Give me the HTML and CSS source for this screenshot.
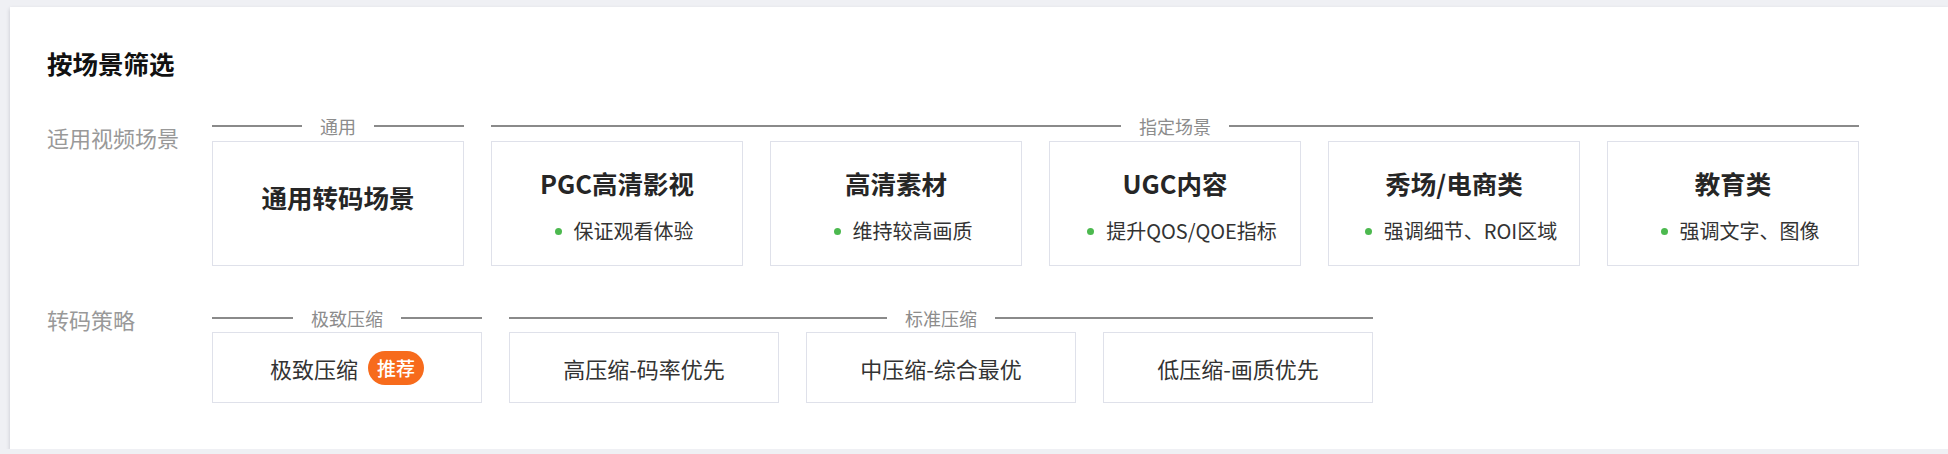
FILE: index.html
```html
<!DOCTYPE html>
<html lang="zh-CN">
<head>
<meta charset="utf-8">
<title>按场景筛选</title>
<link rel="stylesheet" href="styles.css">
</head>
<body>
<div class="panel">
  <h2 class="panel-title">按场景筛选</h2>

  <div class="filter-row filter-row--scene">
    <div class="row-label">适用视频场景</div>
    <div class="groups">
      <div class="group">
        <div class="divider"><span>通用</span></div>
        <div class="options">
          <div class="scene-card scene-card--single">
            <div class="scene-title">通用转码场景</div>
          </div>
        </div>
      </div>
      <div class="group">
        <div class="divider"><span>指定场景</span></div>
        <div class="options">
          <div class="scene-card">
            <div class="scene-title">PGC高清影视</div>
            <div class="scene-desc"><i class="dot"></i>保证观看体验</div>
          </div>
          <div class="scene-card">
            <div class="scene-title">高清素材</div>
            <div class="scene-desc"><i class="dot"></i>维持较高画质</div>
          </div>
          <div class="scene-card">
            <div class="scene-title">UGC内容</div>
            <div class="scene-desc"><i class="dot"></i>提升QOS/QOE指标</div>
          </div>
          <div class="scene-card">
            <div class="scene-title">秀场/电商类</div>
            <div class="scene-desc"><i class="dot"></i>强调细节、ROI区域</div>
          </div>
          <div class="scene-card">
            <div class="scene-title">教育类</div>
            <div class="scene-desc"><i class="dot"></i>强调文字、图像</div>
          </div>
        </div>
      </div>
    </div>
  </div>

  <div class="filter-row filter-row--strategy">
    <div class="row-label">转码策略</div>
    <div class="groups">
      <div class="group">
        <div class="divider"><span>极致压缩</span></div>
        <div class="options">
          <div class="strategy-card">极致压缩<span class="badge">推荐</span></div>
        </div>
      </div>
      <div class="group">
        <div class="divider"><span>标准压缩</span></div>
        <div class="options">
          <div class="strategy-card">高压缩-码率优先</div>
          <div class="strategy-card">中压缩-综合最优</div>
          <div class="strategy-card">低压缩-画质优先</div>
        </div>
      </div>
    </div>
  </div>
</div>
</body>
</html>
```

FILE: styles.css
```css
html, body {
  margin: 0;
  padding: 0;
}

body {
  background: #eff0f4;
  font-family: "Noto Sans CJK SC", "Noto Sans", sans-serif;
  color: #333;
  padding: 7px 0 0 10px;
  overflow: hidden;
}

.panel {
  background: #fff;
  padding: 38px 0 46px 37px;
  box-shadow: 0 2px 4px rgba(40, 40, 60, 0.22);
}

.panel-title {
  margin: 0;
  font-size: 25.5px;
  line-height: 36px;
  font-weight: 700;
  color: #111;
}

.filter-row {
  display: flex;
  align-items: flex-start;
}

.filter-row--scene {
  margin-top: 33px;
}

.filter-row--strategy {
  margin-top: 40px;
}

.row-label {
  width: 165px;
  flex: none;
  font-size: 22px;
  line-height: 30px;
  color: #999;
}

.filter-row--scene .row-label {
  padding-top: 8px;
}

.filter-row--strategy .row-label {
  margin-top: -2px;
}

.groups {
  display: flex;
  gap: 27px;
}

.group {
  display: flex;
  flex-direction: column;
}

.divider {
  display: flex;
  align-items: center;
  height: 24px;
  font-size: 18px;
  line-height: 24px;
  color: #8c8c8c;
}

.divider::before,
.divider::after {
  content: "";
  flex: 1;
  height: 2px;
  background: #8a8a8a;
}

.divider span {
  padding: 0 18px;
}

.options {
  display: flex;
  gap: 27px;
  margin-top: 3px;
}

.filter-row--strategy .options {
  margin-top: 2px;
}

.scene-card {
  width: 252px;
  height: 125px;
  box-sizing: border-box;
  border: 1px solid #dfe1ea;
  display: flex;
  flex-direction: column;
  align-items: center;
  padding-top: 24px;
}

.scene-card--single {
  padding-top: 38px;
}

.scene-title {
  font-size: 25.5px;
  line-height: 34px;
  font-weight: 600;
  color: #262626;
}

.scene-desc {
  margin-top: 17px;
  padding-left: 14px;
  display: flex;
  align-items: center;
  font-size: 20px;
  line-height: 28px;
  color: #333;
}

.dot {
  width: 7px;
  height: 7px;
  border-radius: 50%;
  background: #4cb94f;
  margin-right: 12px;
}

.strategy-card {
  width: 270px;
  height: 71px;
  box-sizing: border-box;
  border: 1px solid #dfe1ea;
  display: flex;
  align-items: center;
  justify-content: center;
  font-size: 22px;
  color: #333;
}

.badge {
  margin-left: 10px;
  height: 34px;
  padding: 0 9px;
  border-radius: 17px;
  background: #f76b1c;
  color: #fff;
  font-size: 19px;
  line-height: 34px;
  font-weight: 500;
}
```
